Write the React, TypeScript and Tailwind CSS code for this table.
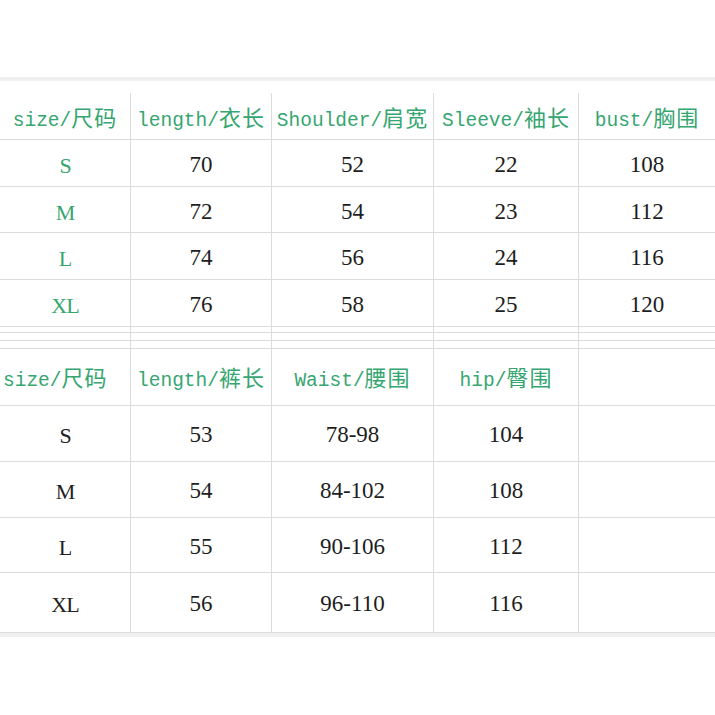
import React from "react";

const GREEN = "text-[#36a671]";
const cols = "grid grid-cols-[131px_141px_162px_145px_136px]";

function Head({ en, zh }: { en: string; zh: string }) {
  return (
    <span className={`${GREEN} whitespace-nowrap`}>
      <span className="font-['Liberation_Mono',monospace] text-[19.5px]">{en}</span>
      <span className="font-['Noto_Sans_CJK_SC',sans-serif] text-[22px] tracking-[1px]">{zh}</span>
    </span>
  );
}

function Cell({
  children,
  last,
  className = "",
}: {
  children?: React.ReactNode;
  last?: boolean;
  className?: string;
}) {
  return (
    <div
      className={`flex items-center justify-center ${last ? "" : "border-r border-[#dcdcdc]"} ${className}`}
    >
      {children}
    </div>
  );
}

function Size({ v, green }: { v: string; green?: boolean }) {
  return (
    <span
      className={`font-['Liberation_Serif',serif] text-[22px] tracking-[-1px] ${green ? GREEN : "text-[#222]"}`}
    >
      {v}
    </span>
  );
}

function Num({ v }: { v: string }) {
  return <span className="font-['Liberation_Serif',serif] text-[23px] text-[#1e1e1e]">{v}</span>;
}

export default function App() {
  const top = [
    ["S", "70", "52", "22", "108"],
    ["M", "72", "54", "23", "112"],
    ["L", "74", "56", "24", "116"],
    ["XL", "76", "58", "25", "120"],
  ];
  const topH = ["h-[47px]", "h-[46px]", "h-[47px]", "h-[47px]"];
  const bottom = [
    ["S", "53", "78-98", "104"],
    ["M", "54", "84-102", "108"],
    ["L", "55", "90-106", "112"],
    ["XL", "56", "96-110", "116"],
  ];
  const botH = ["h-[56px]", "h-[56px]", "h-[55px]", "h-[60px]"];
  const sepH = ["h-[6px]", "h-[8px]", "h-[8px]"];

  return (
    <div className="w-[715px] h-[715px] bg-white overflow-hidden">
      <div className="h-[77px]" />
      <div className="h-[4px] bg-[#efefef]" />
      {/* top table header */}
      <div className={`${cols} h-[58px]`}>
        {[
          ["size/", "尺码"],
          ["length/", "衣长"],
          ["Shoulder/", "肩宽"],
          ["Sleeve/", "袖长"],
          ["bust/", "胸围"],
        ].map(([en, zh], i) => (
          <div key={i} className="flex flex-col">
            <div className="h-[12px]" />
            <Cell last={i === 4} className="flex-1 pt-[4px]">
              <Head en={en} zh={zh} />
            </Cell>
          </div>
        ))}
      </div>
      {top.map((r, ri) => (
        <div key={ri} className={`${cols} ${topH[ri]} border-t border-[#dcdcdc]`}>
          {r.map((v, i) => (
            <Cell key={i} last={i === 4} className="pt-[5px]">
              {i === 0 ? <Size v={v} green /> : <Num v={v} />}
            </Cell>
          ))}
        </div>
      ))}
      {sepH.map((h, si) => (
        <div key={si} className={`${cols} ${h} border-t border-[#dcdcdc]`}>
          {[0, 1, 2, 3, 4].map((i) => (
            <Cell key={i} last={i === 4} />
          ))}
        </div>
      ))}
      {/* bottom table header */}
      <div className={`${cols} h-[57px] border-t border-[#dcdcdc]`}>
        {[
          ["size/", "尺码"],
          ["length/", "裤长"],
          ["Waist/", "腰围"],
          ["hip/", "臀围"],
          null,
        ].map((h, i) => (
          <Cell key={i} last={i === 4} className={i === 0 ? "justify-start pl-[3px] pt-[2px]" : "pt-[2px]"}>
            {h ? <Head en={h[0]} zh={h[1]} /> : null}
          </Cell>
        ))}
      </div>
      {bottom.map((r, ri) => (
        <div key={ri} className={`${cols} ${botH[ri]} border-t border-[#dcdcdc]`}>
          {[...r, ""].map((v, i) => (
            <Cell key={i} last={i === 4} className="pt-[4px]">
              {i === 0 ? <Size v={v} /> : v ? <Num v={v} /> : null}
            </Cell>
          ))}
        </div>
      ))}
      <div className="h-[1px] bg-[#dcdcdc]" />
      <div className="h-[4px] bg-[#f0f0f0]" />
    </div>
  );
}
